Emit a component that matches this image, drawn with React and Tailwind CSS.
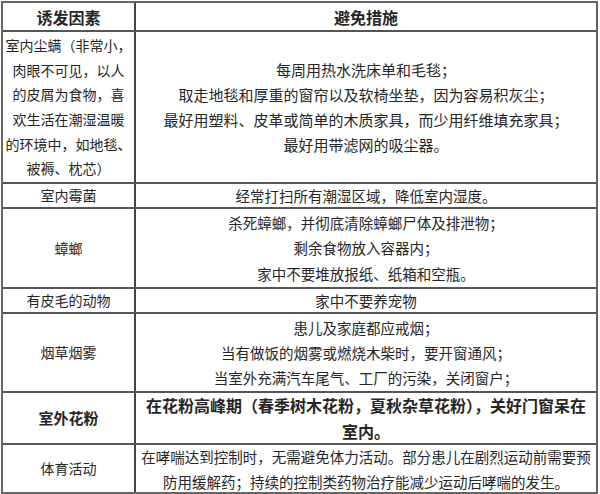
import React from 'react';

const rows = [
    {
        factor: ['室内尘螨（非常小，', '肉眼不可见，以人', '的皮屑为食物，喜', '欢生活在潮湿温暖', '的环境中，如地毯、', '被褥、枕芯）'],
        tips: ['每周用热水洗床单和毛毯；', '取走地毯和厚重的窗帘以及软椅坐垫，因为容易积灰尘；', '最好用塑料、皮革或简单的木质家具，而少用纤维填充家具；', '最好用带滤网的吸尘器。'],
        h: 'h-[152px]',
        size: 'text-[15px] leading-[25px]'
    },
    { factor: ['室内霉菌'], tips: ['经常打扫所有潮湿区域，降低室内湿度。'], h: 'h-[25px]', size: 'text-[14.5px] leading-[25px]' },
    {
        factor: ['蟑螂'],
        tips: ['杀死蟑螂，并彻底清除蟑螂尸体及排泄物；', '剩余食物放入容器内；', '家中不要堆放报纸、纸箱和空瓶。'],
        h: 'h-[80px]',
        size: 'text-[14.5px] leading-[25.5px]'
    },
    { factor: ['有皮毛的动物'], tips: ['家中不要养宠物'], h: 'h-[25px]', size: 'text-[14.5px] leading-[25px]' },
    {
        factor: ['烟草烟雾'],
        tips: ['患儿及家庭都应戒烟；', '当有做饭的烟雾或燃烧木柴时，要开窗通风；', '当室外充满汽车尾气、工厂的污染，关闭窗户；'],
        h: 'h-[79px]',
        size: 'text-[14.5px] leading-[25px]'
    },
    {
        factor: ['室外花粉'],
        tips: ['在花粉高峰期（春季树木花粉，夏秋杂草花粉），关好门窗呆在', '室内。'],
        h: 'h-[52px]',
        size: 'text-[16px] leading-[26px] font-bold',
        bold: true
    },
    {
        factor: ['体育活动'],
        tips: ['在哮喘达到控制时，无需避免体力活动。部分患儿在剧烈运动前需要预', '防用缓解药；持续的控制类药物治疗能减少运动后哮喘的发生。'],
        h: 'h-[49px]',
        size: 'text-[14.5px] leading-[25px]'
    }
];

const App = () => {
    return (
        <div className="bg-white w-[600px] h-[494px] overflow-hidden pt-[1px] pl-[1px] text-[#262626]" style={{ fontFamily: '"Noto Sans CJK SC", "Noto Sans", sans-serif' }}>
            <div className="w-[597px] border-2 border-[#666] flex flex-col">
                {/* Header */}
                <div className="flex h-[27px] font-bold text-[16px]">
                    <div className="w-[133px] border-r-2 border-[#444] flex items-center justify-center">诱发因素</div>
                    <div className="flex-1 flex items-center justify-center">避免措施</div>
                </div>

                {rows.map((row, i) => (
                    <div key={i} className={`flex border-t-2 border-[#555] ${row.h}`}>
                        <div className={`w-[133px] border-r-2 border-[#444] flex flex-col items-center justify-center leading-[24.6px] whitespace-nowrap ${row.bold ? 'font-bold text-[15px]' : 'text-[14px]'}`}>
                            {row.factor.map((t, j) => <div key={j}>{t}</div>)}
                        </div>
                        <div className={`flex-1 flex flex-col items-center justify-center whitespace-nowrap ${row.size}`}>
                            {row.tips.map((t, j) => <div key={j}>{t}</div>)}
                        </div>
                    </div>
                ))}
            </div>
        </div>
    );
};

export default App;
